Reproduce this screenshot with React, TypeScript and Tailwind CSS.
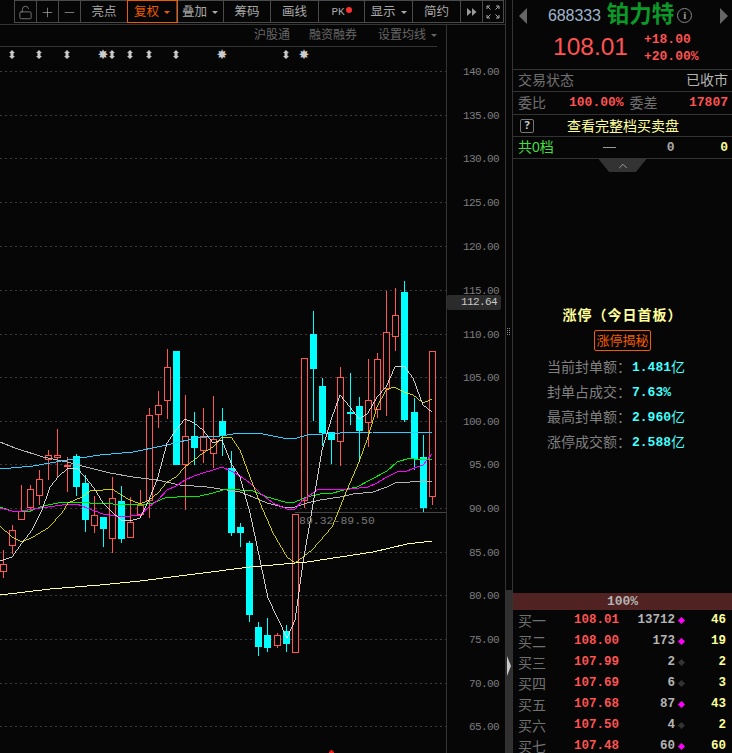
import React from "react";
import { LockOpen, Plus, Minus, ChevronUp } from "lucide-react";

const cjk = "font-['Liberation_Sans','Noto_Sans_CJK_SC',sans-serif]";
const mono = "font-['Liberation_Mono','Noto_Sans_CJK_SC',monospace]";

// x, body top, body bottom, wick top, wick bottom, up(red) or down(cyan)
type Candle = [number, number, number, number, number, "r" | "c"];

const candles: Candle[] = [
  [3, 564, 571, 550, 578, "r"],
  [12, 530, 545, 525, 554, "r"],
  [21, 511, 519, 485, 520, "r"],
  [30, 489, 507, 485, 512, "r"],
  [39, 479, 495, 470, 505, "r"],
  [48, 455, 459, 450, 480, "r"],
  [57, 455, 457, 429, 477, "r"],
  [67, 465, 466, 457, 492, "r"],
  [76, 456, 487, 454, 496, "c"],
  [85, 483, 520, 475, 532, "c"],
  [94, 515, 525, 496, 533, "r"],
  [103, 517, 529, 517, 547, "c"],
  [112, 498, 538, 477, 553, "r"],
  [121, 501, 539, 486, 543, "c"],
  [130, 522, 537, 497, 537, "r"],
  [140, 505, 514, 490, 518, "r"],
  [149, 415, 500, 408, 518, "r"],
  [158, 405, 414, 391, 428, "r"],
  [167, 367, 400, 349, 419, "r"],
  [176, 351, 465, 351, 465, "c"],
  [185, 436, 464, 395, 510, "r"],
  [194, 436, 448, 412, 465, "c"],
  [203, 437, 450, 408, 463, "r"],
  [213, 439, 453, 396, 468, "r"],
  [222, 421, 436, 408, 456, "c"],
  [231, 468, 533, 451, 536, "c"],
  [240, 527, 533, 523, 547, "c"],
  [249, 543, 615, 541, 622, "c"],
  [258, 627, 647, 622, 656, "c"],
  [267, 635, 648, 618, 652, "c"],
  [277, 635, 645, 633, 648, "r"],
  [286, 631, 644, 625, 652, "c"],
  [295, 514, 652, 514, 652, "r"],
  [304, 358, 500, 358, 508, "r"],
  [313, 334, 369, 311, 421, "c"],
  [322, 386, 433, 378, 446, "c"],
  [331, 432, 440, 432, 464, "c"],
  [340, 377, 441, 367, 466, "r"],
  [350, 412, 414, 373, 425, "c"],
  [359, 406, 431, 397, 462, "c"],
  [368, 400, 422, 359, 447, "r"],
  [377, 359, 409, 353, 418, "r"],
  [386, 332, 388, 291, 416, "r"],
  [395, 315, 336, 288, 351, "r"],
  [404, 292, 420, 281, 422, "c"],
  [414, 412, 459, 398, 470, "c"],
  [423, 457, 508, 435, 512, "c"],
  [432, 351, 496, 351, 505, "r"],
];

const lines: { color: string; width: number; pts: string }[] = [
  {
    color: "#ffff99",
    width: 1,
    pts: "0,595 50,589 100,585 140,581 250,567 307,562 340,557 373,552 407,544 432,541",
  },
  {
    color: "#33ccff",
    width: 1,
    pts: "0,469 33,466 67,460 100,455 133,452 167,445 200,437 220,436 240,433 263,434 283,438 297,438 307,435 340,433 373,432 410,432 432,433",
  },
  {
    color: "#b4b4b4",
    width: 1,
    pts: "0,442 15,448 43,457 67,462 90,468 110,473 133,477 157,480 180,485 207,487 240,492 253,497 267,503 283,507 295,507 307,503 320,500 340,497 353,494 373,492 387,487 397,482 410,482 432,481",
  },
  {
    color: "#00ee00",
    width: 1,
    pts: "0,507 12,511 30,511 43,506 63,502 90,503 113,504 140,505 153,503 167,497 177,497 200,496 213,493 227,489 240,490 253,491 267,497 285,502 295,502 307,497 320,494 333,493 347,489 357,487 370,480 387,471 397,462 410,458 420,460 432,459",
  },
  {
    color: "#ff00ff",
    width: 1,
    pts: "0,508 12,511 22,511 33,509 48,507 62,505 77,504 87,508 103,514 121,517 140,515 149,507 158,500 167,490 176,486 185,480 194,476 203,473 213,470 222,467 231,471 240,476 250,483 260,493 273,503 287,509 295,509 303,500 317,490 323,489 340,490 350,489 368,487 377,483 387,477 397,472 407,471 417,467 423,465 432,454",
  },
  {
    color: "#ffff00",
    width: 0.8,
    pts: "0,526 12,537 22,542 33,537 48,528 62,513 68,503 82,497 90,491 103,490 112,489 121,495 130,500 140,504 149,500 158,493 167,482 176,477 185,467 194,460 203,453 213,447 222,437 231,437 240,450 250,477 260,503 273,533 287,557 295,563 312,550 332,527 347,490 359,462 368,437 377,407 386,390 394,387 404,392 413,395 423,403 432,399",
  },
  {
    color: "#ffffff",
    width: 0.8,
    pts: "0,561 12,557 22,543 32,530 42,510 50,487 58,477 68,468 77,468 85,477 94,488 103,503 112,512 121,520 130,521 140,518 149,500 158,477 167,443 176,430 185,419 194,423 203,430 213,443 222,440 231,463 240,477 250,513 260,560 268,598 287,638 295,620 303,563 312,510 322,450 332,417 340,395 350,407 359,419 368,413 377,397 386,387 395,367 404,366 413,378 423,405 432,412",
  },
];

const gridY = [71, 115, 158, 202, 246, 290, 334, 377, 421, 464, 508, 552, 595, 639, 683, 726];
const axis = ["140.00", "135.00", "130.00", "125.00", "120.00", "115.00", "110.00", "105.00", "100.00", "95.00", "90.00", "85.00", "80.00", "75.00", "70.00", "65.00"];

const arrows = [12, 39, 67, 112, 130, 149, 176, 286];
const stars = [103, 222, 304];

const bids = [
  ["买一", "108.01", "13712", true, "46"],
  ["买二", "108.00", "173", true, "19"],
  ["买三", "107.99", "2", false, "2"],
  ["买四", "107.69", "6", false, "3"],
  ["买五", "107.68", "87", true, "43"],
  ["买六", "107.50", "4", false, "2"],
  ["买七", "107.48", "60", true, "60"],
] as const;

const sealRows = [
  ["当前封单额：", "1.481", "亿"],
  ["封单占成交：", "7.63%", ""],
  ["最高封单额：", "2.960", "亿"],
  ["涨停成交额：", "2.588", "亿"],
];

const Caret = ({ color = "border-t-[#aaa]" }: { color?: string }) => (
  <span className={`ml-[5px] inline-block h-0 w-0 border-x-[3px] border-t-[3px] border-x-transparent ${color}`} />
);

const Cell = ({ w, children, active }: { w: string; children: React.ReactNode; active?: boolean }) => (
  <div
    className={`${w} flex h-full shrink-0 items-center justify-center border-r border-[#4a4a4a] pt-[1px] ${
      active ? "outline outline-[#f05a00] text-[#f05a00] z-10" : "text-[#a8a8a8]"
    }`}
  >
    {children}
  </div>
);

const Toolbar = () => (
  <div className="flex h-[25px] shrink-0 border-b border-[#333] pl-[14px]">
    <div className={`${cjk} flex h-[23px] w-[490px] border border-[#4a4a4a] text-[12.500px]`}>
      <Cell w="w-[22px]">
        <LockOpen size={15} strokeWidth={1.5} className="text-[#777]" />
      </Cell>
      <Cell w="w-[22px]">
        <Plus size={15} strokeWidth={1} className="text-[#bbb]" />
      </Cell>
      <Cell w="w-[22px]">
        <Minus size={15} strokeWidth={1} className="text-[#bbb]" />
      </Cell>
      <Cell w="w-[47px]">亮点</Cell>
      <Cell w="w-[49px]" active>
        复权
        <Caret color="border-t-[#f05a00]" />
      </Cell>
      <Cell w="w-[47px]">
        叠加
        <Caret />
      </Cell>
      <Cell w="w-[47px]">筹码</Cell>
      <Cell w="w-[48px]">画线</Cell>
      <Cell w="w-[46px]">
        <span className={`${mono} text-[11px]`}>PK</span>
        <span className="mb-[5px] ml-[1px] h-[6px] w-[6px] rounded-full bg-[#ff3030]" />
      </Cell>
      <Cell w="w-[48px]">
        显示
        <Caret />
      </Cell>
      <Cell w="w-[48px]">简约</Cell>
      <Cell w="w-[22px]">
        <svg width="10" height="8" viewBox="0 0 10 8" fill="#999">
          <path d="M0 0l4.500 4L0 8zM5 0l4.500 4L5 8z" />
        </svg>
      </Cell>
      <div className="flex flex-1 items-center justify-center">
        <svg width="14" height="14" viewBox="0 0 14 14" fill="none" stroke="#aaa" strokeWidth="1">
          <path d="M1 4V1h3M1 1l3.500 3.500M10 1h3v3M13 1L9.500 4.500M1 10v3h3M1 13l3.500-3.500M13 10v3h-3M13 13L9.500 9.500" />
        </svg>
      </div>
    </div>
  </div>
);

const SubTabs = () => (
  <div className={`${cjk} mr-[9px] flex h-[22px] shrink-0 items-center justify-end border-b border-[#333] pb-[1px] text-[12px] text-[#666]`}>
    <span>沪股通</span>
    <span className="ml-[19px]">融资融券</span>
    <span className="ml-[21px]">设置均线</span>
    <Caret color="border-t-[#666]" />
  </div>
);

const Chart = () => (
  <svg width="446" height="706" viewBox="0 47 446 706" className="block">
    {gridY.map((y) => (
      <line key={y} x1="0" x2="446" y1={y + 0.5} y2={y + 0.5} stroke="#3c3c3c" strokeDasharray="2 3" />
    ))}
    {arrows.map((x) => (
      <path key={x} d={`M${x} 50l3 3h-1.500v3h1.500l-3 3l-3-3h1.500v-3h-1.500z`} fill="#c8c8c8" />
    ))}
    {stars.map((x) => (
      <text key={x} x={x} y="59" textAnchor="middle" fontSize="13" fill="#ccc" fontWeight="700" fontFamily="'DejaVu Sans', sans-serif">
        ✸
      </text>
    ))}
    <line x1="295" x2="446" y1="512.500" y2="512.500" stroke="#444" />
    {candles.map(([x, top, bottom, wt, wb, kind]) => {
      const color = kind === "r" ? "#ff5555" : "#00ffff";
      return (
        <g key={x} shapeRendering="crispEdges">
          <line x1={x + 0.5} x2={x + 0.5} y1={wt} y2={top} stroke={color} />
          <line x1={x + 0.5} x2={x + 0.5} y1={bottom} y2={wb} stroke={color} />
          {kind === "r" ? (
            <rect x={x - 2.5} y={top + 0.5} width="6" height={bottom - top} fill="#060606" stroke={color} />
          ) : (
            <rect x={x - 3} y={top} width="7" height={bottom - top} fill={color} />
          )}
        </g>
      );
    })}
    {lines.map((l) => (
      <polyline key={l.color} points={l.pts} fill="none" stroke={l.color} strokeWidth={l.width} shapeRendering="crispEdges" />
    ))}
    <text x="299" y="524" fontSize="11.500" fill="#777" fontFamily="'Liberation Mono', monospace">
      89.32-89.50
    </text>
    <path d="M329 753v-1.500h1.500v-1.500h2v1.500h1.500v1.500z" fill="#ff2020" />
  </svg>
);

const Axis = () => (
  <div className="relative h-full w-[58px] shrink-0 overflow-hidden">
    <svg width="58" height="728" viewBox="447 25 58 728" className="block">
      {gridY.map((y, i) => (
        <text key={y} x="499" y={y + 4} textAnchor="end" fontSize="11" letterSpacing="-0.600" fill="#7d7d7d" fontFamily="'Liberation Mono', monospace">
          {axis[i]}
        </text>
      ))}
    </svg>
    <div className={`${mono} absolute left-0 top-[270px] flex h-[15px] w-[54px] items-center justify-end rounded-[2px] bg-[#2b2b2b] pr-[4px] text-[11px] leading-none tracking-[-0.6px] text-[#c8c8c8]`}>
      112.64
    </div>
  </div>
);

const Gutter = () => (
  <div className="relative h-full w-[8px] shrink-0 border-x border-[#333]">
    <div className="absolute left-[1px] top-[328px] grid grid-cols-2 gap-x-[1px] gap-y-[1px]">
      {Array.from({ length: 8 }).map((_, i) => (
        <span key={i} className="h-[1px] w-[1px] bg-[#888]" />
      ))}
    </div>
    <div className="absolute bottom-0 left-0 top-[590px] w-[6px] bg-[#303030]">
      <span className="absolute left-[1px] top-[66px] h-0 w-0 border-y-[10px] border-l-[4px] border-y-transparent border-l-[#c8c8c8]" />
    </div>
  </div>
);

const Row = ({ h, children, last }: { h: string; children: React.ReactNode; last?: boolean }) => (
  <div className={`${h} relative flex shrink-0 items-center ${last ? "" : "border-b border-[#333]"} pl-[5px] pr-[4px]`}>{children}</div>
);

const Quote = () => (
  <>
    <div className="flex h-[31px] shrink-0 items-center pl-[6px] pr-[4px]">
      <span className="h-0 w-0 border-y-[8px] border-r-[8px] border-y-transparent border-r-[#666]" />
      <span className="ml-[21px] font-['Liberation_Sans',sans-serif] text-[16px] leading-none tracking-[-0.1px] text-[#9fb4cc]">688333</span>
      <span className={`${cjk} ml-[6px] text-[22.500px] font-bold leading-none text-[#0a9a28]`}>铂力特</span>
      <span className="ml-[3px] flex h-[15px] w-[15px] items-center justify-center rounded-full border border-[#888] font-['Liberation_Serif',serif] text-[11px] font-bold text-[#999]">
        i
      </span>
      <span className="ml-auto h-0 w-0 border-y-[8px] border-l-[8px] border-y-transparent border-l-[#666]" />
    </div>
    <div className="flex h-[39px] shrink-0 items-center border-b border-[#333] pb-[6px] pl-[40px]">
      <span className="font-['Liberation_Sans',sans-serif] text-[24.500px] leading-none text-[#ff5252]">108.01</span>
      <div className={`${mono} ml-[16px] mt-[2px] flex flex-col text-[13px] font-bold leading-[17px] text-[#ff5252]`}>
        <span>+18.00</span>
        <span>+20.00%</span>
      </div>
    </div>
    <Row h="h-[22px]">
      <span className={`${cjk} text-[14px] text-[#707070]`}>交易状态</span>
      <span className={`${cjk} ml-auto text-[14px] text-[#b4b4b4]`}>已收市</span>
    </Row>
    <Row h="h-[23px]">
      <span className={`${cjk} text-[14px] text-[#707070]`}>委比</span>
      <span className={`${mono} ml-[23px] text-[13px] font-bold text-[#ff5252]`}>100.00%</span>
      <span className={`${cjk} ml-[6px] text-[14px] text-[#707070]`}>委差</span>
      <span className={`${mono} ml-auto text-[13px] font-bold text-[#ff5252]`}>17807</span>
    </Row>
    <Row h="h-[22px]">
      <span className="ml-[2px] flex h-[14px] w-[14px] items-center justify-center rounded-[2px] border border-[#777] text-[11px] font-bold text-[#ccc]">?</span>
      <span className={`${cjk} ml-[33px] text-[14px] leading-none text-[#ffff99]`}>查看完整档买卖盘</span>
    </Row>
    <Row h="h-[22px]">
      <span className={`${cjk} text-[14px] text-[#44dd44]`}>共0档</span>
      <span className="ml-[49px] h-[1px] w-[13px] bg-[#999]" />
      <span className={`${mono} ml-[51px] text-[13px] font-bold text-[#aaa]`}>0</span>
      <span className={`${mono} ml-auto text-[13px] font-bold text-[#ffff99]`}>0</span>
    </Row>
    <div className="flex h-[14px] shrink-0 justify-center">
      <div className="flex h-[13px] w-[48px] items-center justify-center bg-[#333] [clip-path:polygon(0_0,100%_0,78%_100%,22%_100%)]">
        <ChevronUp size={14} strokeWidth={1.5} className="text-[#aaa]" />
      </div>
    </div>
  </>
);

const Seal = () => (
  <div className="flex flex-1 flex-col items-center pt-[132px]">
    <div className={`${cjk} text-[14px] font-bold leading-[20px] tracking-[1px] text-[#ffff99]`}>涨停（今日首板）</div>
    <div className={`${cjk} mt-[5px] flex h-[21px] w-[57px] items-center justify-center rounded-[2px] border border-[#f05a00] text-[13px] text-[#f05a00]`}>
      涨停揭秘
    </div>
    <div className="mt-[4px] flex w-[151px] flex-col">
      {sealRows.map(([label, value, unit]) => (
        <div key={label} className="flex h-[25px] items-center whitespace-nowrap">
          <span className={`${cjk} w-[85px] shrink-0 text-[14px] text-[#808080]`}>{label}</span>
          <span className={`${mono} text-[13px] font-bold text-[#44ffff]`}>{value}</span>
          <span className={`${cjk} text-[14px] text-[#44ffff]`}>{unit}</span>
        </div>
      ))}
    </div>
  </div>
);

const BidList = () => (
  <div className="shrink-0">
    <div className={`${mono} flex h-[17px] items-center justify-center bg-[#512222] text-[13px] font-bold text-[#b4b4b4]`}>100%</div>
    <div className="h-[143px] overflow-hidden">
      {bids.map(([name, price, qty, on, count]) => (
        <div key={name} className="flex h-[21px] items-center pl-[5px]">
          <span className={`${cjk} w-[56px] text-[14px] leading-none text-[#707070]`}>{name}</span>
          <span className={`${mono} w-[48px] text-[12.500px] font-bold text-[#ff5252]`}>{price}</span>
          <span className={`${mono} w-[53px] text-right text-[12.500px] font-bold text-[#b4b4b4]`}>{qty}</span>
          <span className={`ml-[4px] h-[5px] w-[5px] rotate-45 ${on ? "bg-[#ff00ff]" : "bg-[#333]"}`} />
          <span className={`${mono} w-[42px] text-right text-[12.500px] font-bold text-[#ffff99]`}>{count}</span>
        </div>
      ))}
    </div>
  </div>
);

const App = () => {
  return (
    <div className="flex h-[753px] w-[732px] overflow-hidden bg-[#060606]">
      <div className="flex h-full w-[505px] shrink-0 flex-col">
        <Toolbar />
        <div className="flex min-h-0 flex-1">
          <div className="flex w-[447px] shrink-0 flex-col overflow-hidden border-r border-[#333]">
            <SubTabs />
            <Chart />
          </div>
          <Axis />
        </div>
      </div>
      <Gutter />
      <div className="flex h-full min-w-0 flex-1 flex-col">
        <Quote />
        <Seal />
        <BidList />
      </div>
    </div>
  );
};

export default App;
